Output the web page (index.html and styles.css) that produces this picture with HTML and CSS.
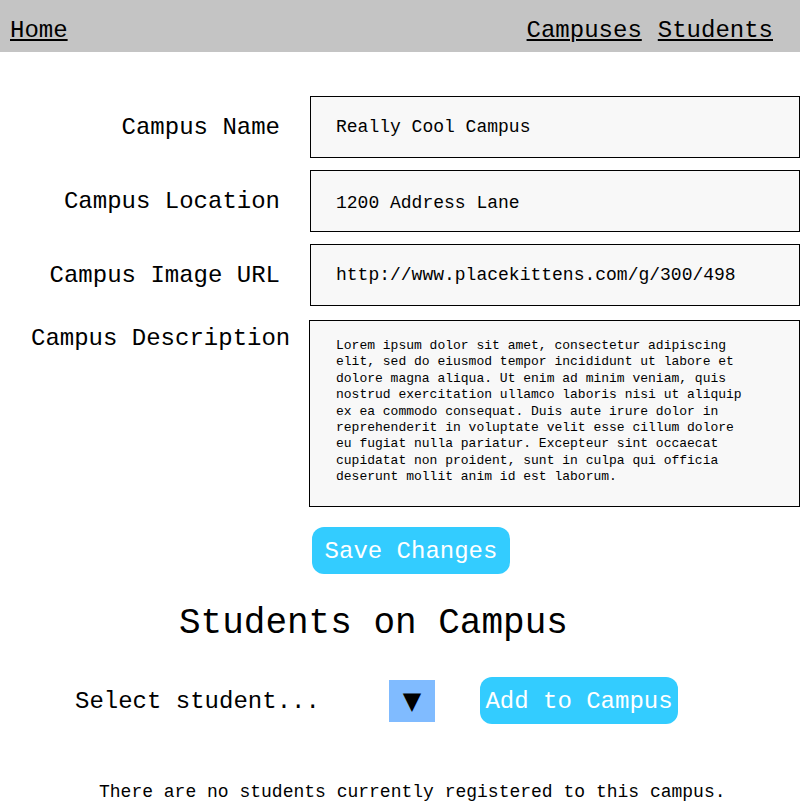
FILE: index.html
```html
<!DOCTYPE html>
<html lang="en">
<head>
<meta charset="utf-8">
<title>Edit Campus</title>
<link rel="stylesheet" href="styles.css">
</head>
<body>
<nav class="nav">
  <a class="nav-link" href="#">Home</a>
  <div class="nav-right">
    <a class="nav-link" href="#">Campuses</a>
    <a class="nav-link" href="#">Students</a>
  </div>
</nav>

<form class="campus-form">
  <label class="field-label">Campus Name</label>
  <div class="field-input">Really Cool Campus</div>

  <label class="field-label">Campus Location</label>
  <div class="field-input field-input-low">1200 Address Lane</div>

  <label class="field-label">Campus Image URL</label>
  <div class="field-input">http://www.placekittens.com/g/300/498</div>

  <label class="field-label label-top">Campus Description</label>
  <div class="field-textarea"><p class="textarea-text">Lorem ipsum dolor sit amet, consectetur adipiscing elit, sed do eiusmod tempor incididunt ut labore et dolore magna aliqua. Ut enim ad minim veniam, quis nostrud exercitation ullamco laboris nisi ut aliquip ex ea commodo consequat. Duis aute irure dolor in reprehenderit in voluptate velit esse cillum dolore eu fugiat nulla pariatur. Excepteur sint occaecat cupidatat non proident, sunt in culpa qui officia deserunt mollit anim id est laborum.</p></div>
</form>

<div class="save-row">
  <button class="btn" type="button">Save Changes</button>
</div>

<h2 class="section-title">Students on Campus</h2>

<div class="select-row">
  <div class="select-box">Select student...</div>
  <div class="select-arrow">▼</div>
  <button class="btn btn-add" type="button">Add to Campus</button>
</div>

<p class="empty-note">There are no students currently registered to this campus.</p>
</body>
</html>
```

FILE: styles.css
```css
html, body {
  margin: 0;
  padding: 0;
  background: #ffffff;
}

body {
  font-family: "Liberation Mono", "DejaVu Sans Mono", monospace;
  color: #000;
  width: 800px;
  overflow: hidden;
}

.nav {
  height: 52px;
  background: #c4c4c4;
  display: flex;
  align-items: center;
  justify-content: space-between;
  padding: 0 27px 0 10px;
  box-sizing: border-box;
}

.nav-right {
  display: flex;
  gap: 16px;
}

.nav-link {
  font-size: 24px;
  color: #000;
  text-decoration: underline;
  line-height: 28px;
  padding-top: 10px;
}

.campus-form {
  margin: 44px 0 0 31px;
  display: grid;
  grid-template-columns: 249px 490px;
  column-gap: 30px;
  row-gap: 12px;
  align-items: center;
}

.field-label {
  font-size: 24px;
  text-align: right;
  white-space: nowrap;
}

.label-top {
  align-self: start;
  padding-top: 7px;
}

.field-input {
  height: 62px;
  box-sizing: border-box;
  border: 1px solid #000;
  background: #f8f8f8;
  padding: 0 0 0 25px;
  font-size: 18px;
  display: flex;
  align-items: center;
  white-space: nowrap;
}

.field-input-low {
  padding-top: 4px;
}

.field-textarea {
  margin: 2px 0 0 -1px;
  width: 491px;
  height: 187px;
  box-sizing: border-box;
  border: 1px solid #000;
  background: #f8f8f8;
  padding: 17px 50px 0 26px;
}

.textarea-text {
  margin: 0;
  font-size: 13px;
  line-height: 16.4px;
}

.save-row {
  margin: 20px 0 0 312px;
}

.btn {
  font-family: inherit;
  font-size: 24px;
  color: #fff;
  background: #33ccff;
  border: none;
  border-radius: 12px;
  width: 198px;
  height: 47px;
  padding: 2px 0 0;
  box-sizing: border-box;
  display: flex;
  align-items: center;
  justify-content: center;
  white-space: nowrap;
}

.section-title {
  margin: 29px 0 0 179px;
  font-size: 36px;
  font-weight: normal;
  line-height: 42px;
}

.select-row {
  margin: 32px 0 0 75px;
  display: flex;
  align-items: center;
}

.select-box {
  width: 314px;
  font-size: 24px;
  padding-top: 2px;
}

.select-arrow {
  width: 46px;
  height: 42px;
  background: #80bbff;
  display: flex;
  align-items: center;
  justify-content: center;
  font-size: 24px;
  font-family: "DejaVu Sans", sans-serif;
}

.btn-add {
  margin-left: 45px;
}

.empty-note {
  margin: 58px 0 0 99px;
  font-size: 18px;
  line-height: 21px;
  white-space: nowrap;
}
```
